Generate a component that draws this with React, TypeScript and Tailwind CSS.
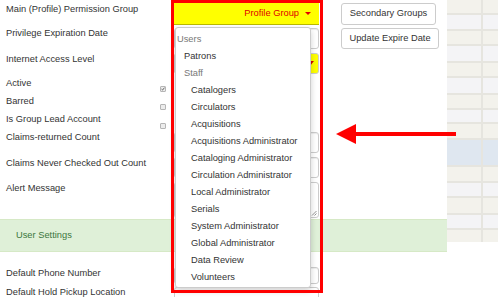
import React from "react";

type RowProps = {
  label: string;
  className: string;
  labelClass?: string;
  check?: React.ReactNode;
  children?: React.ReactNode;
  side?: React.ReactNode;
};

function FormRow({ label, className, labelClass = "mt-[2.5px]", check, children, side }: RowProps) {
  return (
    <div className={`flex shrink-0 items-start ${className}`}>
      <div className={`w-[160px] shrink-0 pl-[6px] leading-[11px] text-[#333] whitespace-nowrap ${labelClass}`}>{label}</div>
      <div className="w-[14px] shrink-0">{check}</div>
      <div className="w-[145px] shrink-0">{children}</div>
      {side && <div className="ml-[22px]">{side}</div>}
    </div>
  );
}

function Input({ className }: { className: string }) {
  return (
    <div
      className={`relative rounded-[3px] border border-[#ccc] bg-white shadow-[inset_0_1px_1px_rgba(0,0,0,0.075)] ${className}`}
    />
  );
}

function Check({ checked, className }: { checked?: boolean; className: string }) {
  return (
    <div className={`relative h-[6px] w-[6px] rounded-[1px] border border-[#b5b5b5] bg-[#ececec] ${className}`}>
      {checked && (
        <svg viewBox="0 0 6 6" className="absolute left-0 top-0 h-[4px] w-[4px]">
          <path d="M0.8 3.2 L2.3 4.6 L5.2 1" stroke="#444" strokeWidth="1.2" fill="none" />
        </svg>
      )}
    </div>
  );
}

function Button({ children, className }: { children: React.ReactNode; className: string }) {
  return (
    <div
      className={`flex items-center justify-center rounded-[3px] border border-[#ccc] bg-white text-[#333] whitespace-nowrap ${className}`}
    >
      {children}
    </div>
  );
}

const menu: { text: string; indent: string; muted?: boolean }[] = [
  { text: "Users", indent: "pl-[1px]", muted: true },
  { text: "Patrons", indent: "pl-[8px]" },
  { text: "Staff", indent: "pl-[8px]", muted: true },
  { text: "Catalogers", indent: "pl-[15px]" },
  { text: "Circulators", indent: "pl-[15px]" },
  { text: "Acquisitions", indent: "pl-[15px]" },
  { text: "Acquisitions Administrator", indent: "pl-[15px]" },
  { text: "Cataloging Administrator", indent: "pl-[15px]" },
  { text: "Circulation Administrator", indent: "pl-[15px]" },
  { text: "Local Administrator", indent: "pl-[15px]" },
  { text: "Serials", indent: "pl-[15px]" },
  { text: "System Administrator", indent: "pl-[15px]" },
  { text: "Global Administrator", indent: "pl-[15px]" },
  { text: "Data Review", indent: "pl-[15px]" },
  { text: "Volunteers", indent: "pl-[15px]" },
];

// right-hand grid rows: height class + colour class
const gridRows: [string, string][] = [
  ["h-[13px]", "bg-[#f3f2ec]"],
  ["h-[14px]", "bg-[#f4f4f6]"],
  ["h-[13px]", "bg-[#f3f2ec]"],
  ["h-[15px]", "bg-[#f4f4f6]"],
  ["h-[13px]", "bg-[#f3f2ec]"],
  ["h-[15px]", "bg-[#f4f4f6]"],
  ["h-[13px]", "bg-[#f3f2ec]"],
  ["h-[12px]", "bg-[#f4f4f6]"],
  ["h-[14px]", "bg-[#f3f2ec]"],
  ["h-[25px]", "bg-[#dfe7f0]"],
  ["h-[14px]", "bg-[#f3f2ec]"],
  ["h-[13px]", "bg-[#f4f4f6]"],
  ["h-[15px]", "bg-[#f3f2ec]"],
  ["h-[13px]", "bg-[#f4f4f6]"],
  ["h-[12px]", "bg-[#f3f2ec]"],
];

export default function App() {
  return (
    <div className="relative flex h-[297px] w-[498px] items-start overflow-hidden bg-white font-['Liberation_Sans',Arial,sans-serif] text-[9.3px]">
      {/* form */}
      <div className="flex w-[447px] shrink-0 flex-col">
        <FormRow
          label="Main (Profile) Permission Group"
          className="h-[25px]"
          labelClass="mt-[3.5px]"
          side={<Button className="mt-[3px] h-[22px] w-[95px]">Secondary Groups</Button>}
        >
          <div className="mt-[3px] flex h-[22px] items-center justify-end gap-[6px] border-b border-[#b9b900] bg-[#ffff00] pr-[8px] text-[#e00000]">
            <span>Profile Group</span>
            <span className="h-0 w-0 border-x-[3px] border-t-[3px] border-x-transparent border-t-[#e00000]" />
          </div>
        </FormRow>
        <FormRow
          label="Privilege Expiration Date"
          className="h-[25px]"
          side={<Button className="mt-[3px] h-[21px] w-[98px]">Update Expire Date</Button>}
        >
          <Input className="mt-[3px] h-[21px]" />
        </FormRow>
        <FormRow label="Internet Access Level" className="h-[25px]" labelClass="mt-[3.5px]">
          <div className="mt-[3px] flex h-[21px] items-center justify-end rounded-[3px] border border-[#ccc] bg-[#ffff00] pr-[4px]">
            <span className="h-0 w-0 border-x-[4px] border-t-[5px] border-x-transparent border-t-[#d40000]" />
          </div>
        </FormRow>
        <FormRow label="Active" className="h-[18px]" check={<Check checked className="mt-[10.5px]" />} />
        <FormRow label="Barred" className="h-[18px]" check={<Check className="mt-[10.5px]" />} />
        <FormRow label="Is Group Lead Account" className="h-[18px]" check={<Check className="mt-[11.5px]" />} />
        <FormRow label="Claims-returned Count" className="h-[26px]">
          <Input className="mt-[3px] h-[21px]" />
        </FormRow>
        <FormRow label="Claims Never Checked Out Count" className="h-[25px]">
          <Input className="mt-[2px] h-[21px]" />
        </FormRow>
        <FormRow label="Alert Message" className="h-[39px]">
          <div className="relative mt-[2px] h-[36px] rounded-[3px] border border-[#ccc] bg-white">
            <svg viewBox="0 0 6 6" className="absolute bottom-[1px] right-[1px] h-[6px] w-[6px]">
              <path d="M1 5.5 L5.5 1 M3.5 5.5 L5.5 3.5" stroke="#777" strokeWidth="0.8" />
            </svg>
          </div>
        </FormRow>
        <div className="h-[33px] shrink-0 border-y border-[#d6e9c6] bg-[#dff0d8] pl-[16px] leading-[31px] text-[#3c763d]">
          User Settings
        </div>
        <div className="h-[14px] shrink-0" />
        <FormRow label="Default Phone Number" className="h-[20px]" labelClass="mt-[1.5px]">
          <Input className="mt-[1px] h-[17px]" />
        </FormRow>
        <FormRow label="Default Hold Pickup Location" className="h-[20px]" labelClass="mt-[0.5px]">
          <div className="mt-[1px] flex h-[20px] items-center justify-end rounded-[3px] border border-[#ccc] bg-white pr-[12px]">
            <span className="mt-[4px] h-0 w-0 border-x-[3px] border-t-[3px] border-x-transparent border-t-[#555]" />
          </div>
        </FormRow>
      </div>

      {/* right grid */}
      <div className="flex w-[51px] shrink-0 flex-col gap-[2px] bg-[#e6e5df]">
        {gridRows.map(([h, c], i) => (
          <div key={i} className={`flex shrink-0 gap-[2px] ${h}`}>
            <div className={`w-[34px] ${c}`} />
            <div className={`flex-1 ${c}`} />
          </div>
        ))}
      </div>

      {/* open dropdown */}
      <div className="absolute left-[175px] top-[27px] flex h-[261px] w-[136px] flex-col rounded-[3px] border border-[#ccc] bg-white py-[3px] shadow-[0_3px_6px_rgba(0,0,0,0.18)]">
        {menu.map((m) => (
          <div
            key={m.text}
            className={`h-[17px] shrink-0 whitespace-nowrap leading-[17px] ${m.indent} ${m.muted ? "text-[#777]" : "text-[#333]"}`}
          >
            {m.text}
          </div>
        ))}
      </div>

      {/* annotation */}
      <div className="pointer-events-none absolute left-[171px] top-0 h-[293px] w-[152px] border-[3px] border-[#ff0000]" />
      <svg className="absolute left-[334px] top-[122px] h-[24px] w-[124px]" viewBox="0 0 124 24">
        <polygon points="2,12 22,2 22,22" fill="#ff0000" />
        <rect x="21" y="10" width="101" height="4" fill="#ff0000" />
      </svg>
    </div>
  );
}
